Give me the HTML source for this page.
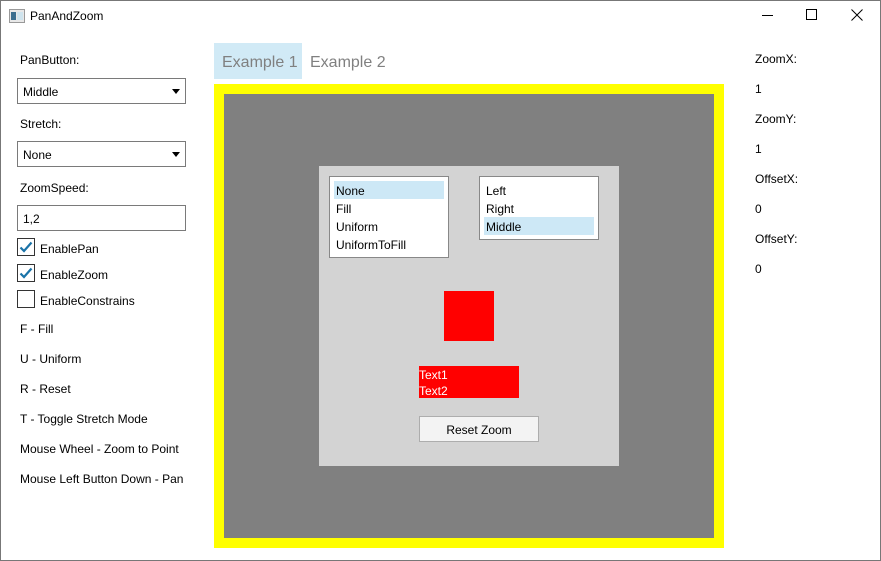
<!DOCTYPE html>
<html><head><meta charset="utf-8"><style>
*{margin:0;padding:0;box-sizing:border-box}
body{width:881px;height:561px;position:relative;overflow:hidden;background:#fff;font-family:"Liberation Sans",sans-serif;font-size:12px;color:#000}
.a{position:absolute;white-space:nowrap}
.win{position:absolute;left:0;top:0;width:881px;height:561px;border:1px solid #777}
.combo{position:absolute;left:17px;width:169px;height:26px;border:1px solid #7a7a7a;background:#fff;padding:6px 0 0 5px}
.arrow:after{content:"";position:absolute;right:5px;top:10px;border-left:4px solid transparent;border-right:4px solid transparent;border-top:5px solid #000}
.cb{position:absolute;left:17px;width:18px;height:18px;border:1px solid #333;background:#fff}
.item{position:absolute;height:18px;padding:3px 0 0 2px}
.sel{background:#cde8f6}
</style></head><body>
<div class="win"></div>
<svg class="a" style="left:9px;top:9px" width="16" height="14"><rect x="0.5" y="0.5" width="15" height="13" fill="#e8e8e8" stroke="#999"/><rect x="2" y="3" width="5" height="8" fill="#3a6e8f"/><rect x="8" y="3" width="6" height="8" fill="#cfe4ee"/></svg>
<div class="a" style="left:30px;top:9px">PanAndZoom</div>
<div class="a" style="left:762px;top:15px;width:11px;height:1px;background:#000"></div>
<div class="a" style="left:806px;top:9px;width:11px;height:11px;border:1px solid #000"></div>
<svg class="a" style="left:851px;top:9px" width="12" height="12"><path d="M0.5 0.5L11.5 11.5M11.5 0.5L0.5 11.5" stroke="#000" stroke-width="1"/></svg>

<div class="a" style="left:20px;top:53px">PanButton:</div>
<div class="combo arrow" style="top:78px">Middle</div>
<div class="a" style="left:20px;top:117px">Stretch:</div>
<div class="combo arrow" style="top:141px">None</div>
<div class="a" style="left:20px;top:181px">ZoomSpeed:</div>
<div class="combo" style="top:205px">1,2</div>
<div class="cb" style="top:238px"><svg width="16" height="16"><path d="M2.5 8.5L6 12L13.5 3.5" stroke="#1a73a8" stroke-width="2.2" fill="none"/></svg></div>
<div class="a" style="left:40px;top:242px">EnablePan</div>
<div class="cb" style="top:264px"><svg width="16" height="16"><path d="M2.5 8.5L6 12L13.5 3.5" stroke="#1a73a8" stroke-width="2.2" fill="none"/></svg></div>
<div class="a" style="left:40px;top:268px">EnableZoom</div>
<div class="cb" style="top:290px"></div>
<div class="a" style="left:40px;top:294px">EnableConstrains</div>
<div class="a" style="left:20px;top:322px">F - Fill</div>
<div class="a" style="left:20px;top:352px">U - Uniform</div>
<div class="a" style="left:20px;top:382px">R - Reset</div>
<div class="a" style="left:20px;top:412px">T - Toggle Stretch Mode</div>
<div class="a" style="left:20px;top:442px">Mouse Wheel - Zoom to Point</div>
<div class="a" style="left:20px;top:472px">Mouse Left Button Down - Pan</div>

<div class="a" style="left:214px;top:43px;width:88px;height:36px;background:#d1eaf6"></div>
<div class="a" style="left:222px;top:54px;font-size:16px;color:#808080">Example 1</div>
<div class="a" style="left:310px;top:54px;font-size:16px;color:#808080">Example 2</div>

<div class="a" style="left:214px;top:84px;width:510px;height:464px;background:#808080;border:10px solid #ffff00"></div>
<div class="a" style="left:319px;top:166px;width:300px;height:300px;background:#d3d3d3"></div>
<div class="a" style="left:329px;top:176px;width:120px;height:82px;background:#fff;border:1px solid #888"></div>
<div class="item sel" style="left:334px;top:181px;width:110px">None</div>
<div class="item" style="left:334px;top:199px">Fill</div>
<div class="item" style="left:334px;top:217px">Uniform</div>
<div class="item" style="left:334px;top:235px">UniformToFill</div>
<div class="a" style="left:479px;top:176px;width:120px;height:64px;background:#fff;border:1px solid #888"></div>
<div class="item" style="left:484px;top:181px">Left</div>
<div class="item" style="left:484px;top:199px">Right</div>
<div class="item sel" style="left:484px;top:217px;width:110px">Middle</div>
<div class="a" style="left:444px;top:291px;width:50px;height:50px;background:#f00"></div>
<div class="a" style="left:419px;top:366px;width:100px;height:32px;background:#f00;color:#fff;line-height:16px;padding-top:1px;white-space:normal">Text1<br>Text2</div>
<div class="a" style="left:419px;top:416px;width:120px;height:26px;background:#f3f3f3;border:1px solid #adadad;text-align:center;line-height:26px">Reset Zoom</div>

<div class="a" style="left:755px;top:52px">ZoomX:</div>
<div class="a" style="left:755px;top:82px">1</div>
<div class="a" style="left:755px;top:112px">ZoomY:</div>
<div class="a" style="left:755px;top:142px">1</div>
<div class="a" style="left:755px;top:172px">OffsetX:</div>
<div class="a" style="left:755px;top:202px">0</div>
<div class="a" style="left:755px;top:232px">OffsetY:</div>
<div class="a" style="left:755px;top:262px">0</div>
</body></html>
